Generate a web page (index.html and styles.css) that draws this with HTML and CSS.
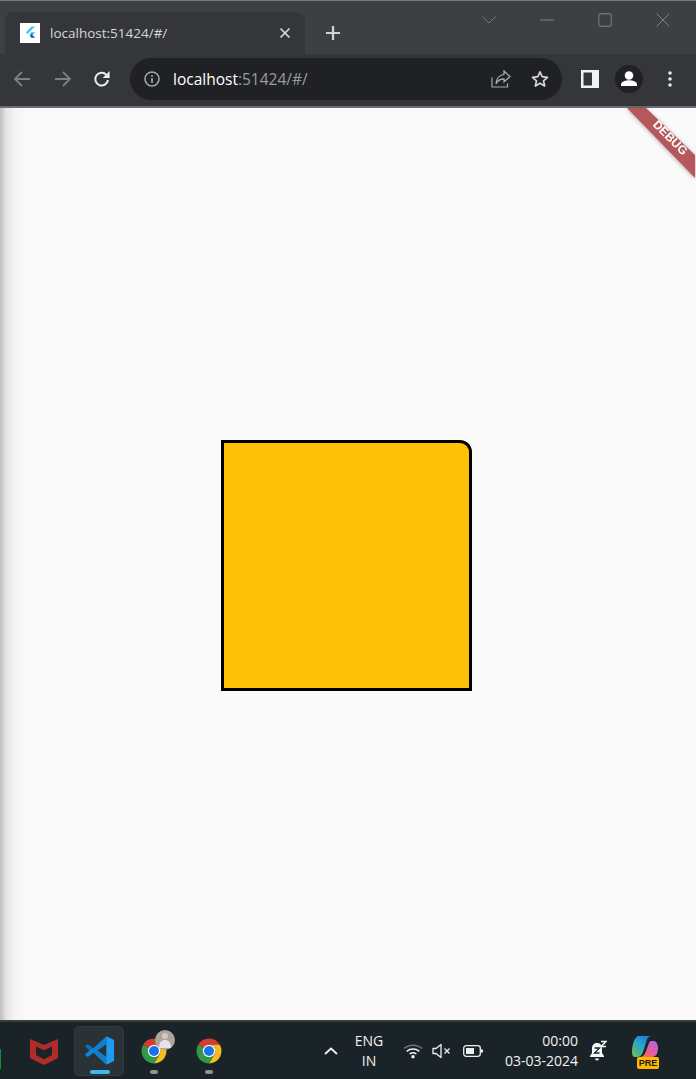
FILE: index.html
```html
<!DOCTYPE html>
<html lang="en">
<head>
<meta charset="utf-8">
<title>localhost:51424/#/</title>
<link rel="stylesheet" href="styles.css">
</head>
<body>
<svg class="defs" width="0" height="0" aria-hidden="true">
  <symbol id="chrome" viewBox="0 0 48 48">
    <path fill="#d93a2e" d="M24 4A20 20 0 0 1 41.32 14L24 14A10 10 0 0 0 15.34 19L6.68 14A20 20 0 0 1 24 4Z"/>
    <path fill="#f4bd1d" d="M41.32 14A20 20 0 0 1 24 44L32.66 29A10 10 0 0 0 24 14Z"/>
    <path fill="#2f9a48" d="M24 44A20 20 0 0 1 6.68 14L15.34 19A10 10 0 0 0 32.66 29Z"/>
    <circle cx="24" cy="24" r="10" fill="#fff"/>
    <circle cx="24" cy="24" r="8" fill="#1a73e8"/>
  </symbol>
  <linearGradient id="cp1" x1="0" y1="1" x2="1" y2="0">
    <stop offset="0" stop-color="#7fc04a"/><stop offset=".5" stop-color="#22a6c9"/><stop offset="1" stop-color="#1c6fe0"/>
  </linearGradient>
  <linearGradient id="cp2" x1="0" y1="1" x2="1" y2="0">
    <stop offset="0" stop-color="#f07a3a"/><stop offset=".5" stop-color="#e45aa8"/><stop offset="1" stop-color="#a66ae8"/>
  </linearGradient>
</svg>

<div class="app">
  <header class="tabstrip">
    <div class="tab">
      <span class="favicon">
        <svg width="20" height="20" viewBox="0 0 20 20"><path fill="#4cc6f4" d="M11.5 3.5h3.6L7.6 11l-1.8-1.8z"/><path fill="#29b0ec" d="M11.3 9.3h3.8l-3.4 3.4-1.9-1.5z"/><path fill="#0a5fb4" d="M9.7 12.8l2-1.6 3.4 3.6h-3.8z"/></svg>
      </span>
      <span class="tab-title">localhost:51424/#/</span>
      <svg class="tab-close" width="12" height="12" viewBox="0 0 12 12"><path d="M1.5 1.5l9 9M10.5 1.5l-9 9" stroke="#d7d9db" stroke-width="1.7" fill="none"/></svg>
    </div>
    <svg class="new-tab" width="16" height="16" viewBox="0 0 16 16"><path d="M8 1v14M1 8h14" stroke="#d0d2d4" stroke-width="2.2" fill="none"/></svg>
    <div class="win-controls">
      <svg class="win-btn" width="14" height="14" viewBox="0 0 14 14"><path d="M.5 3.5L7 10l6.5-6.5" stroke="#70757a" fill="none"/></svg>
      <svg class="win-btn" width="14" height="14" viewBox="0 0 14 14"><path d="M0 7h14" stroke="#7d8184" fill="none"/></svg>
      <svg class="win-btn" width="14" height="14" viewBox="0 0 14 14"><rect x=".75" y=".75" width="12.5" height="12.5" rx="2" stroke="#6c7074" stroke-width="1.3" fill="none"/></svg>
      <svg class="win-btn" width="14" height="14" viewBox="0 0 14 14"><path d="M.5.5l13 13M13.5.5l-13 13" stroke="#7d8184" fill="none"/></svg>
    </div>
  </header>

  <nav class="toolbar">
    <svg class="nav-icon nav-back" width="18" height="18" viewBox="0 0 18 18"><path d="M17 9H2M9 2L2 9l7 7" stroke="#7c7f83" stroke-width="1.8" fill="none"/></svg>
    <svg class="nav-icon nav-forward" width="18" height="18" viewBox="0 0 18 18"><path d="M1 9h15M9 2l7 7-7 7" stroke="#7c7f83" stroke-width="1.8" fill="none"/></svg>
    <svg class="nav-icon nav-reload" width="18" height="18" viewBox="0 0 18 18"><path d="M15 10a6.4 6.4 0 1 1-1.6-5.2" stroke="#eceded" stroke-width="2" fill="none"/><path d="M16.6.9v7h-7z" fill="#eceded"/></svg>
    <div class="omnibox">
      <svg class="info-icon" width="16" height="16" viewBox="0 0 16 16"><circle cx="8" cy="8" r="7" stroke="#a2a5a8" stroke-width="1.6" fill="none"/><path d="M8 7v5M8 4v1.8" stroke="#a2a5a8" stroke-width="1.7"/></svg>
      <span class="url"><span class="url-host">localhost</span>:51424/#/</span>
      <svg class="omni-share" width="20" height="18" viewBox="0 0 20 18"><path d="M1 7.5V17h15.5v-3.500" stroke="#a6a8ab" stroke-width="1.200" fill="none"/><path d="M13 1l6 5.600-6 5.200V9C9 9 6.500 10.500 5 14c0-5 3-9 8-9.700z" stroke="#a6a8ab" stroke-width="1.300" fill="none"/></svg>
      <svg class="omni-star" width="18" height="18" viewBox="0 0 18 18"><path d="M9 1.800l2.200 4.900 5.300.6-4 3.500 1.200 5.200L9 13.300 4.300 16l1.200-5.200-4-3.500 5.300-.6z" stroke="#d5d6d8" stroke-width="1.700" fill="none" stroke-linejoin="round"/></svg>
    </div>
    <svg class="side-panel" width="18" height="18" viewBox="0 0 18 18"><rect width="18" height="18" fill="#f1f2f2"/><rect x="2.500" y="2.500" width="8.500" height="13" fill="#35363a"/></svg>
    <span class="avatar">
      <svg width="28" height="28" viewBox="0 0 28 28"><circle cx="14" cy="10.500" r="4.300" fill="#fff"/><path d="M6 21v-1.500c0-3 5-4.200 8-4.200s8 1.200 8 4.200V21z" fill="#fff"/></svg>
    </span>
    <svg class="kebab" width="4" height="18" viewBox="0 0 4 18"><circle cx="2" cy="3" r="1.800" fill="#e6e7e8"/><circle cx="2" cy="9" r="1.800" fill="#e6e7e8"/><circle cx="2" cy="15" r="1.800" fill="#e6e7e8"/></svg>
  </nav>

  <main class="page">
    <div class="amber-box"></div>
    <svg class="debug-banner" width="70" height="72" viewBox="0 0 70 72">
      <polygon class="debug-band" points="1,0 20,0 69,47 69,70"/>
      <text class="debug-text" x="0" y="0" transform="translate(41.500 32.500) rotate(45)" text-anchor="middle">DEBUG</text>
    </svg>
  </main>

  <footer class="taskbar">
    <div class="task-slot task-partial">
      <svg width="30" height="50" viewBox="0 0 30 50"><rect x="3" y="23" width="24" height="20" fill="#128a3a"/><circle cx="15" cy="18" r="10" fill="#39b4f2"/><text x="15.500" y="22" class="partial-badge">1</text></svg>
    </div>
    <div class="task-slot">
      <svg width="28" height="28" viewBox="0 0 28 28"><path fill="#b02c2a" d="M0 2l14 6 14-6v19l-14 7-14-7zM6 9.500V18l8 4.300 8-4.300V9.500l-8 3.700z" fill-rule="evenodd"/></svg>
    </div>
    <div class="task-slot task-active">
      <svg width="31" height="31" viewBox="0 0 100 100">
        <path fill="#0a6fb8" d="M3 36l9-7 18 14v14L12 71l-9-7 15-14z"/>
        <path fill="#0e86d8" d="M30 43L72 4v26L44 50 72 70v26L30 57 12 71 3 64l15-14z" opacity=".9"/>
        <path fill="#1f9cf0" d="M72 4l25 12v68L72 96z"/>
      </svg>
      <span class="task-dot task-dot-active"></span>
    </div>
    <div class="task-slot">
      <svg width="30" height="30"><use href="#chrome"/></svg>
      <span class="profile-badge">
        <svg width="20" height="20" viewBox="0 0 20 20"><circle cx="10" cy="10" r="10" fill="#a9a6a0"/><circle cx="10" cy="6" r="3" fill="#d9c6c0"/><path d="M4 18c0-6 3-8 6-8s6 2 6 8z" fill="#e7e2ea"/></svg>
      </span>
      <span class="task-dot"></span>
    </div>
    <div class="task-slot">
      <svg width="30" height="30"><use href="#chrome"/></svg>
      <span class="task-dot"></span>
    </div>

    <svg class="tray-chevron" width="14" height="8" viewBox="0 0 14 8"><path d="M1 7l6-5.500L13 7" stroke="#f1f2f2" stroke-width="1.800" fill="none"/></svg>
    <div class="tray-lang"><span>ENG</span><span>IN</span></div>
    <svg class="tray-wifi" width="20" height="16" viewBox="0 0 20 16"><path d="M1 5.500C6 1 14 1 19 5.500" stroke="#6f7578" stroke-width="1.500" fill="none"/><path d="M3.700 8.300c3.700-3 8.900-3 12.600 0M6.600 11c2-1.500 4.800-1.500 6.800 0" stroke="#f1f2f2" stroke-width="1.500" fill="none"/><circle cx="10" cy="13.800" r="1.700" fill="#f1f2f2"/></svg>
    <svg class="tray-volume" width="20" height="16" viewBox="0 0 20 16"><path d="M1 5.500h3L9 1.500v13l-5-4H1z" stroke="#eef0f0" stroke-width="1.300" fill="none" stroke-linejoin="round"/><path d="M12.500 5.500l5 5M17.500 5.500l-5 5" stroke="#eef0f0" stroke-width="1.300" fill="none"/></svg>
    <svg class="tray-battery" width="20" height="14" viewBox="0 0 20 14"><rect x=".7" y="1.700" width="16.600" height="10.600" rx="2.500" stroke="#eef0f0" stroke-width="1.300" fill="none"/><rect x="3" y="4" width="8" height="6" fill="#eef0f0"/><rect x="18" y="5.500" width="2" height="3" fill="#eef0f0"/></svg>
    <div class="tray-clock"><span>00:00</span><span>03-03-2024</span></div>
    <div class="tray-bell">
      <svg width="18" height="22" viewBox="0 0 18 22"><path fill="#f5f6f6" d="M8 3c-3.500 0-5 2.500-5 5.500V13l-2 3v1h14v-1l-2-3V8.500C13 5.500 11.500 3 8 3zM6 18.500h4a2 2 0 0 1-4 0z"/><path d="M5.500 8h5l-5 5h5" stroke="#1b2528" stroke-width="1.300" fill="none"/><path d="M12 1.500h5l-5 5h5" stroke="#f5f6f6" stroke-width="1.500" fill="none"/></svg>
    </div>
    <div class="tray-copilot">
      <svg width="28" height="26" viewBox="0 0 28 26">
        <path fill="url(#cp1)" d="M8 1h13c-4 0-5 3-6 7l-3 9c-1 3-3 5-6 5H4c-2 0-3-2-3-5C1 9 4 1 8 1z"/>
        <path fill="url(#cp2)" d="M21 22H9c3 0 5-3 6-6l3-8c.5-1 1-2 2-2h3c2 0 4 3 4 7 0 5-2 9-6 9z"/>
      </svg>
      <span class="pre-badge">PRE</span>
    </div>
  </footer>
</div>
</body>
</html>
```

FILE: styles.css
```css
* { box-sizing: border-box; }

html, body {
  margin: 0;
  height: 100%;
  overflow: hidden;
}

body {
  font-family: "Open Sans", "Noto Sans", sans-serif;
  background: #fafafa;
}

.defs { position: absolute; }

.app {
  display: flex;
  flex-direction: column;
  height: 1079px;
}

/* Tab strip */
.tabstrip {
  display: flex;
  align-items: flex-start;
  flex: 0 0 54px;
  background: #3d4043;
  border-top: 1px solid #78797a;
}

.tab {
  display: flex;
  align-items: center;
  width: 300px;
  height: 42px;
  margin: 11px 0 0 5px;
  padding: 0 14px 0 15px;
  background: #35363a;
  border-radius: 8px 8px 0 0;
}

.favicon {
  display: flex;
  flex: 0 0 20px;
  height: 20px;
  background: #fff;
}

.tab-title {
  flex: 1;
  margin-left: 10px;
  font-size: 13.500px;
  color: #d6d8da;
  white-space: nowrap;
}

.new-tab { margin: 24px 0 0 20px; }

.win-controls {
  display: flex;
  gap: 44px;
  margin: 12px 0 0 141px;
}

/* Toolbar */
.toolbar {
  display: flex;
  align-items: center;
  flex: 0 0 54px;
  padding-bottom: 2px;
  background: #35363a;
  border-bottom: 2px solid #6c6d6f;
}

.nav-back { margin-left: 13px; }
.nav-forward { margin-left: 23px; }
.nav-reload { margin-left: 21px; }

.omnibox {
  display: flex;
  align-items: center;
  width: 432px;
  height: 42px;
  margin-left: 19px;
  padding-left: 14px;
  background: #202124;
  border-radius: 21px;
}

.info-icon { flex: none; }

.url {
  flex: 1;
  margin-left: 13px;
  font-size: 15.500px;
  color: #9a9da0;
  white-space: nowrap;
}

.url-host { color: #fff; }

.omni-share { margin-right: 20px; }
.omni-star { margin-right: 13px; }

.side-panel { margin-left: 19px; }

.avatar {
  display: flex;
  margin-left: 16px;
  background: #202124;
  border-radius: 50%;
}

.kebab { margin-left: 25px; }

/* Page */
.page {
  flex: 1;
  display: flex;
  align-items: center;
  justify-content: center;
  position: relative;
  padding: 3px 3px 0 0;
  background: linear-gradient(to right, #bfbfbf 0, #e4e4e4 6px, #f5f5f5 15px, #fafafa 28px);
}

.amber-box {
  width: 251px;
  height: 251px;
  background: #ffc107;
  border: 3px solid #000;
  border-top-right-radius: 12px;
}

.debug-banner {
  position: absolute;
  top: 0;
  right: 0;
  overflow: hidden;
  filter: drop-shadow(0 1px 2px rgba(0, 0, 0, .3));
}

.debug-band { fill: #b5585c; }

.debug-text {
  font-family: "Liberation Sans", sans-serif;
  font-size: 12px;
  font-weight: 700;
  fill: #fff;
}

/* Taskbar */
.taskbar {
  display: flex;
  align-items: center;
  flex: 0 0 59px;
  gap: 5px;
  background: #1a2428;
  border-top: 2px solid #3a3d3f;
  overflow: hidden;
  color: #f1f2f2;
  font-size: 14px;
}

.task-slot {
  position: relative;
  display: flex;
  align-items: center;
  justify-content: center;
  flex: 0 0 50px;
  height: 50px;
  border-radius: 5px;
}

.task-partial { margin-left: -36px; }
.partial-badge { font-size: 11px; fill: #0b2a3d; text-anchor: middle; }

.task-active {
  background: #2a3236;
  border: 1px solid #343b3f;
}

.task-dot {
  position: absolute;
  left: 21px;
  bottom: 2px;
  width: 8px;
  height: 4px;
  background: #8d9295;
  border-radius: 2px;
}

.task-dot-active {
  left: 15px;
  bottom: 1px;
  width: 20px;
  background: #3fb6f6;
}

.profile-badge {
  position: absolute;
  top: 4px;
  left: 26px;
  display: flex;
}

.tray-chevron { margin: 0 0 0 85px; }

.tray-lang,
.tray-clock {
  display: flex;
  flex-direction: column;
  line-height: 20px;
}

.tray-lang {
  align-items: center;
  width: 40px;
  margin-left: 6px;
}

.tray-wifi { margin-left: 9px; }
.tray-volume { margin-left: 4px; }
.tray-battery { margin-left: 6px; }

.tray-clock {
  align-items: flex-end;
  width: 92px;
  margin-left: -2px;
}

.tray-bell {
  display: flex;
  margin-left: 6px;
}

.tray-copilot {
  position: relative;
  display: flex;
  margin: -6px 0 0 19px;
}

.pre-badge {
  position: absolute;
  left: 6px;
  bottom: -8px;
  width: 22px;
  height: 12px;
  background: #ffb900;
  border-radius: 2px;
  color: #1a1a1a;
  font: 700 9px/12px "Liberation Sans", sans-serif;
  text-align: center;
}
```
